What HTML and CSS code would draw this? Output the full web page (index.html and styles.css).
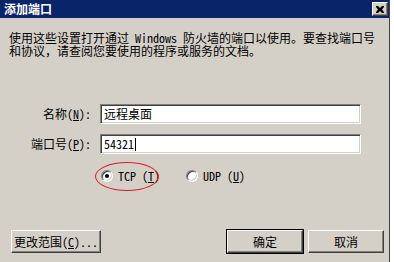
FILE: index.html
```html
<!DOCTYPE html>
<html>
	<head>
		<meta charset="UTF-8"/>
		<title>添加端口</title>
		<link rel="stylesheet" href="styles.css">
	</head>
	<body>
		<div class="window">

		  <div class="titlebar">
			<span class="title">添加端口</span>
			<span class="close">
			  <svg width="8" height="7" viewBox="0 0 8 7"><path d="M0 0h2l2 2 2-2h2v1l-2 2.5 2 2.5v1h-2l-2-2-2 2h-2v-1l2-2.5-2-2.5z" fill="#000"/></svg>
			</span>
		  </div>

		  <div class="body">
			<p class="intro">使用这些设置打开通过 Windows 防火墙的端口以使用。要查找端口号<br>和协议，请查阅您要使用的程序或服务的文档。</p>

			<div class="fields">
			  <label for="name">名称(<u>N</u>):</label>
			  <div class="field" id="name">远程桌面</div>
			  <label for="port">端口号(<u>P</u>):</label>
			  <div class="field" id="port">54321<span class="caret"></span></div>
			</div>

			<div class="options">
			  <div class="option marked">
				<span class="radio checked"></span>
				<span>TCP (<u>T</u>)</span>
			  </div>
			  <div class="option">
				<span class="radio"></span>
				<span>UDP (<u>U</u>)</span>
			  </div>
			</div>

			<div class="buttons">
			  <button class="btn scope">更改范围(<u>C</u>)...</button>
			  <div class="actions">
				<button class="btn default">确定</button>
				<button class="btn">取消</button>
			  </div>
			</div>
		  </div>

		</div>
	</body>
</html>
```

FILE: styles.css
```css
* {
  box-sizing: border-box;
}

body {
  margin: 0;
  background: #fff;
  color: #000;
  font-family: "Noto Sans Mono CJK SC", "Noto Sans CJK SC", sans-serif;
  font-size: 12px;
}

.window {
  width: 390px;
  height: 262px;
  background: #d4d0c8;
  border-right: 1px solid #404040;
  display: flex;
  flex-direction: column;
}

.titlebar {
  height: 18px;
  background: #0a246a;
  display: flex;
  align-items: center;
  justify-content: space-between;
  padding: 0 1px 0 4px;
}

.title {
  color: #fff;
  font-family: "Noto Sans CJK SC", sans-serif;
  font-weight: bold;
  font-size: 12px;
  line-height: 18px;
}

.close {
  width: 16px;
  height: 14px;
  background: #d4d0c8;
  border: 1px solid;
  border-color: #fff #404040 #404040 #fff;
  box-shadow: inset -1px -1px #808080;
  display: flex;
  align-items: center;
  justify-content: center;
}

.close svg {
  display: block;
}

.body {
  flex: 1;
  padding: 13px 5px 9px 9px;
  display: flex;
  flex-direction: column;
}

.intro {
  margin: 0;
  line-height: 13px;
  white-space: nowrap;
}

.fields {
  display: grid;
  grid-template-columns: 82px 261px;
  column-gap: 9px;
  row-gap: 10px;
  align-items: center;
  margin-top: 47px;
}

.fields label {
  text-align: right;
  line-height: 20px;
}

.field {
  height: 20px;
  background: #fff;
  border: 1px solid;
  border-color: #808080 #fff #fff #808080;
  box-shadow: inset 1px 1px #404040, inset -1px -1px #d4d0c8;
  padding: 0 3px;
  line-height: 18px;
  display: flex;
  align-items: center;
}

.caret {
  display: inline-block;
  width: 1px;
  height: 13px;
  background: #000;
  margin-left: 1px;
}

.options {
  display: flex;
  gap: 26px;
  margin: 15px 0 0 92px;
  height: 13px;
  align-items: center;
}

.option {
  display: flex;
  align-items: center;
  gap: 5px;
  line-height: 13px;
}

.marked {
  position: relative;
}

.marked::after {
  content: "";
  position: absolute;
  left: -6px;
  top: -7px;
  width: 62px;
  height: 27px;
  border: 1px solid #d81e28;
  border-radius: 50%;
}

.radio {
  width: 12px;
  height: 12px;
  border-radius: 50%;
  background: #fff;
  border: 1px solid;
  border-color: #808080 #fff #fff #808080;
  box-shadow: inset 1px 1px #404040, inset -1px -1px #d4d0c8;
  display: flex;
  align-items: center;
  justify-content: center;
}

.radio.checked::before {
  content: "";
  width: 4px;
  height: 4px;
  border-radius: 50%;
  background: #000;
}

.buttons {
  margin-top: auto;
  display: flex;
  justify-content: space-between;
  align-items: flex-end;
}

.actions {
  display: flex;
  gap: 5px;
}

.btn {
  height: 23px;
  width: 76px;
  padding: 0;
  background: #d4d0c8;
  color: #000;
  font: inherit;
  border: 1px solid;
  border-color: #fff #404040 #404040 #fff;
  box-shadow: inset -1px -1px #808080;
}

.btn.scope {
  width: 90px;
  margin-left: 2px;
}

.btn.default {
  outline: 1px solid #000;
  outline-offset: 0;
  border-color: #fff #404040 #404040 #fff;
}
```
